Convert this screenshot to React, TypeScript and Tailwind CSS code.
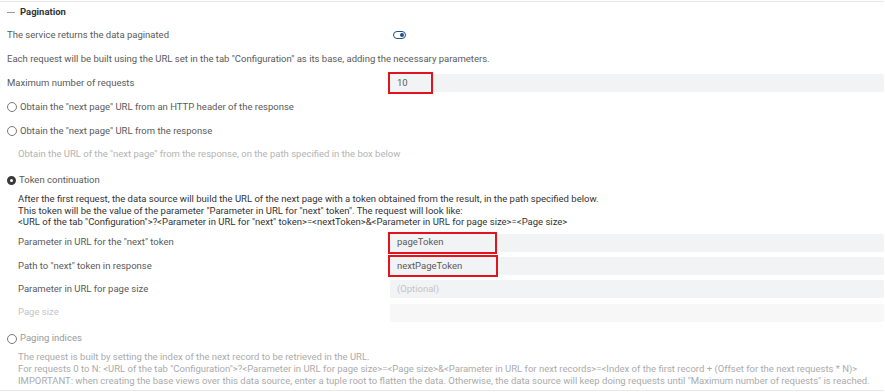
import React from "react";

function Radio({ checked }: { checked?: boolean }) {
  return checked ? (
    <span className="w-[9px] h-[9px] rounded-full border-[3px] border-[#3a3a3a] bg-white shrink-0 mr-[3px]" />
  ) : (
    <span className="w-[10px] h-[10px] rounded-full border border-[#777] bg-white shrink-0 mr-[3px]" />
  );
}

function Field({
  value,
  placeholder,
  marked,
  markWidth,
  light,
}: {
  value?: string;
  placeholder?: string;
  marked?: boolean;
  markWidth?: string;
  light?: boolean;
}) {
  return (
    <div className="relative flex-1 h-[18px]">
      <div
        className={`h-full rounded-[2px] flex items-center pl-[7px] ${
          light ? "bg-[#f7f7f8]" : "bg-[#f2f3f5]"
        }`}
      >
        {value ? (
          <span className="text-[#5a5a5a]">{value}</span>
        ) : (
          <span className="text-[#c4c4c4]">{placeholder}</span>
        )}
      </div>
      {marked && (
        <div
          className={`absolute -left-[2px] -top-[2px] h-[22px] border-[2.5px] border-[#e3131e] ${markWidth}`}
        />
      )}
    </div>
  );
}

export default function App() {
  return (
    <div
      className="w-[885px] h-[392px] bg-white overflow-hidden text-[9.5px] text-[#5a5a5a] pr-[1px] whitespace-nowrap"
      style={{ fontFamily: "Roboto, 'Liberation Sans', sans-serif" }}
    >
      <div className="border-t border-[#e8e8e8] mt-[1px]" />
      <div className="h-[21px] flex items-center px-[7px] gap-[5px]">
        <span className="w-[8px] h-[1px] bg-[#999]" />
        <span className="font-bold text-[#333]">Pagination</span>
      </div>

      <div className="h-[24px] flex items-center pl-[7px]">
        <span className="w-[386px]">The service returns the data paginated</span>
        <span className="relative w-[13px] h-[8px] rounded-full border-[1.5px] border-[#1f4f8f]">
          <span className="absolute right-[1px] top-[0.5px] w-[4px] h-[4px] rounded-full bg-[#1f4f8f]" />
        </span>
      </div>

      <div className="h-[24px] flex items-center pl-[7px]">
        Each request will be built using the URL set in the tab "Configuration" as its base, adding the necessary parameters.
      </div>

      <div className="h-[24px] flex items-center pl-[7px]">
        <span className="w-[383px] shrink-0">Maximum number of requests</span>
        <Field value="10" marked markWidth="w-[45px]" />
      </div>

      <div className="h-[24px] flex items-center pl-[7px]">
        <Radio />
        Obtain the "next page" URL from an HTTP header of the response
      </div>
      <div className="h-[24px] flex items-center pl-[7px]">
        <Radio />
        Obtain the "next page" URL from the response
      </div>
      <div className="h-[22px] flex items-center pl-[18px] text-[#b3b3b3]">
        Obtain the URL of the "next page" from the response, on the path specified in the box below
      </div>

      <div className="h-[28px] flex items-center pl-[7px] pt-[2px]">
        <Radio checked />
        Token continuation
      </div>
      <div className="pl-[18px] leading-[11.5px] text-[#333]">
        <p>After the first request, the data source will build the URL of the next page with a token obtained from the result, in the path specified below.</p>
        <p>This token will be the value of the parameter "Parameter in URL for "next" token". The request will look like:</p>
        <p>{'<URL of the tab "Configuration">?<Parameter in URL for "next" token>=<nextToken>&<Parameter in URL for page size>=<Page size>'}</p>
      </div>

      <div className="flex flex-col mt-[3px]">
        <div className="h-[24px] flex items-center pl-[18px]">
          <span className="w-[372px] shrink-0">Parameter in URL for the "next" token</span>
          <Field value="pageToken" marked markWidth="w-[109px]" />
        </div>
        <div className="h-[23px] flex items-center pl-[18px]">
          <span className="w-[372px] shrink-0">Path to "next" token in response</span>
          <Field value="nextPageToken" marked markWidth="w-[110px]" />
        </div>
        <div className="h-[23px] flex items-center pl-[18px]">
          <span className="w-[372px] shrink-0">Parameter in URL for page size</span>
          <Field placeholder="(Optional)" />
        </div>
        <div className="h-[24px] flex items-center pl-[18px]">
          <span className="w-[372px] shrink-0 text-[#c4c4c4]">Page size</span>
          <Field light />
        </div>
      </div>

      <div className="h-[26px] flex items-center pl-[7px] text-[#999] pt-[2px]">
        <Radio />
        Paging indices
      </div>
      <div className="pl-[18px] leading-[12px] text-[#ababab]">
        <p>The request is built by setting the index of the next record to be retrieved in the URL.</p>
        <p>{'For requests 0 to N: <URL of the tab "Configuration">?<Parameter in URL for page size>=<Page size>&<Parameter in URL for next records>=<Index of the first record + (Offset for the next requests * N)>'}</p>
        <p>IMPORTANT: when creating the base views over this data source, enter a tuple root to flatten the data. Otherwise, the data source will keep doing requests until "Maximum number of requests" is reached.</p>
      </div>
      <div className="border-t border-[#e8e8e8] mt-[3px]" />
    </div>
  );
}
